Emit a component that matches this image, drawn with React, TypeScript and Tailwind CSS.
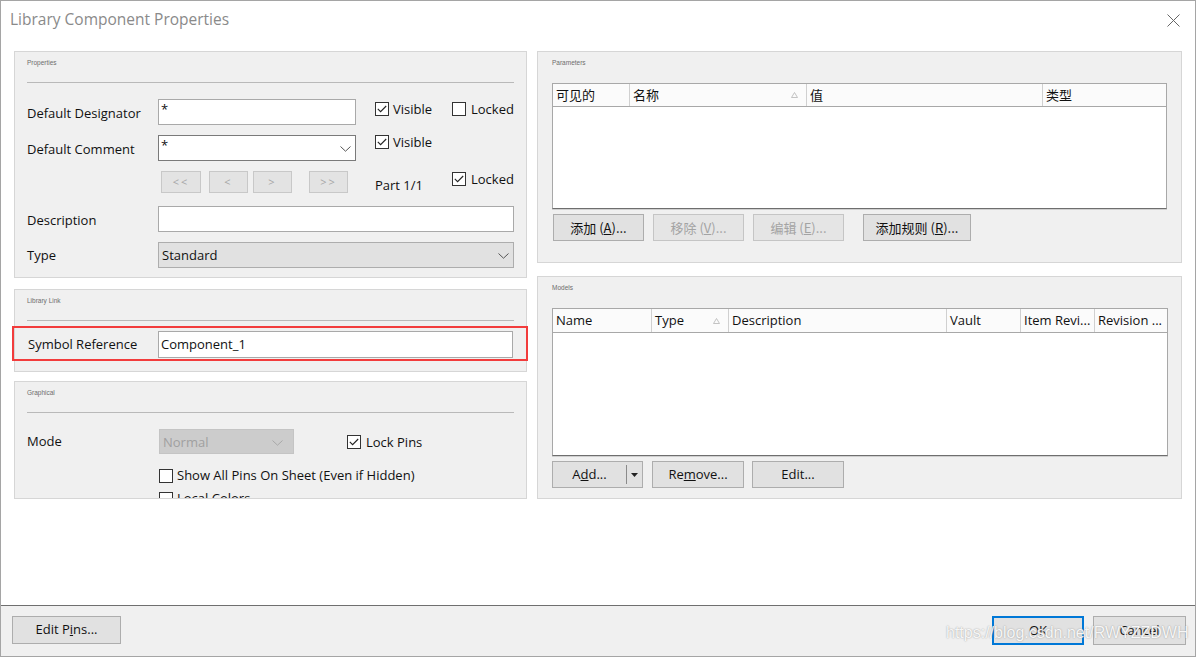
import React from "react";

const FONT = { fontFamily: '"Open Sans", "Noto Sans", "Noto Sans CJK SC", sans-serif' };

function Check({ checked }: { checked?: boolean }) {
  return (
    <span className="inline-flex w-[14px] h-[14px] border border-[#333333] bg-white items-center justify-center shrink-0">
      {checked && (
        <svg width="10" height="8" viewBox="0 0 10 8">
          <path d="M0.8 3.8 L3.6 6.6 L9.2 1" stroke="#222222" strokeWidth="1.1" fill="none" />
        </svg>
      )}
    </span>
  );
}

function Chevron({ color = "#555555" }: { color?: string }) {
  return (
    <svg width="11" height="6" viewBox="0 0 11 6">
      <path d="M0.5 0.5 L5.5 5.2 L10.5 0.5" stroke={color} strokeWidth="1" fill="none" />
    </svg>
  );
}

function SortArrow() {
  return (
    <svg width="7" height="6" viewBox="0 0 7 6">
      <path d="M3.5 0.5 L6.5 5.5 L0.5 5.5 Z" stroke="#b5b5b5" strokeWidth="0.8" fill="none" />
    </svg>
  );
}

function PanelTitle({ children, line }: { children: React.ReactNode; line?: boolean }) {
  return (
    <div className={line ? "h-[31px] border-b border-[#b9b9b9] pt-[6px]" : "h-[31px] pt-[6px]"}>
      <span className="block text-[6.5px] leading-[10px] text-[#6d6d6d]" style={{ fontFamily: '"Liberation Sans", sans-serif' }}>{children}</span>
    </div>
  );
}

function Btn({ children, w, disabled }: { children: React.ReactNode; w: string; disabled?: boolean }) {
  return (
    <div
      className={`${w} h-[27px] flex items-center justify-center border text-[13px] ${
        disabled ? "bg-[#e5e5e5] border-[#c5c5c5] text-[#a3a3a3]" : "bg-[#e1e1e1] border-[#adadad] text-[#111111]"
      }`}
    >
      {children}
    </div>
  );
}

function NavBtn({ children, w }: { children: React.ReactNode; w: string }) {
  return (
    <div className={`${w} h-[22px] flex items-center justify-center border border-[#c8c8c8] bg-[#e3e3e3] text-[11px] text-[#a6a6a6] tracking-[2px]`}>
      {children}
    </div>
  );
}

function HeaderCell({ children, w, arrow, last }: { children: React.ReactNode; w?: string; arrow?: boolean; last?: boolean }) {
  return (
    <div
      className={`${w ?? "flex-1"} h-full flex items-center pl-[3px] text-[13px] text-[#111111] shrink-0 ${
        arrow ? "pr-[8px]" : "pr-[2px]"
      } ${last ? "" : "border-r border-[#d0d0d0]"}`}
    >
      <span className="flex-1 whitespace-nowrap">{children}</span>
      {arrow && <SortArrow />}
    </div>
  );
}

export default function App() {
  return (
    <div
      className="relative w-[1196px] h-[657px] border border-[#a5a5a5] bg-white flex flex-col overflow-hidden text-[#111111]"
      style={FONT}
    >
      {/* Title bar */}
      <div className="h-[39px] shrink-0 flex items-center justify-between pl-[9px] pr-[15px]">
        <span className="text-[15.5px] text-[#8a8a8a] -mt-[1px]">Library Component Properties</span>
        <svg width="13" height="13" viewBox="0 0 13 13">
          <path d="M0.5 0.5 L12.5 12.5 M12.5 0.5 L0.5 12.5" stroke="#666666" strokeWidth="1" />
        </svg>
      </div>

      {/* Main */}
      <div className="flex-1 flex pl-[13px] gap-[10px]">
        {/* Left column */}
        <div className="w-[513px] pt-[11px] flex flex-col">
          {/* Properties */}
          <div className="h-[227px] border border-[#d6d6d6] bg-[#f0f0f0] px-[12px]">
            <PanelTitle line>Properties</PanelTitle>
            <div className="mt-[16px] h-[26px] flex items-start">
              <span className="w-[131px] h-[26px] pt-[4px] flex items-center text-[13px]">Default Designator</span>
              <div className="w-[198px] h-[26px] border border-[#a9a9a9] bg-white pl-[2px] text-[13px] leading-[18px]">*</div>
              <div className="ml-[19px] w-[77px] mt-[3px] flex items-center gap-[4px] text-[13px] leading-[14px]">
                <Check checked />
                <span>Visible</span>
              </div>
              <div className="mt-[3px] flex items-center gap-[5px] text-[13px] leading-[14px]">
                <Check />
                <span>Locked</span>
              </div>
            </div>
            <div className="mt-[10px] h-[26px] flex items-start">
              <span className="w-[131px] h-[26px] pt-[4px] flex items-center text-[13px]">Default Comment</span>
              <div className="w-[198px] h-[26px] border border-[#7a7a7a] bg-white pl-[2px] pr-[4px] flex justify-between text-[13px] leading-[18px]">
                <span>*</span>
                <span className="self-center mt-[2px]"><Chevron /></span>
              </div>
              <div className="ml-[19px] w-[77px] flex items-center gap-[4px] text-[13px] leading-[14px]">
                <Check checked />
                <span>Visible</span>
              </div>
            </div>
            <div className="mt-[10px] h-[22px] flex items-start">
              <div className="w-[131px]" />
              <div className="ml-[3px] flex">
                <NavBtn w="w-[40px]">&lt;&lt;</NavBtn>
                <div className="ml-[8px]"><NavBtn w="w-[39px]">&lt;</NavBtn></div>
                <div className="ml-[5px]"><NavBtn w="w-[39px]">&gt;</NavBtn></div>
                <div className="ml-[17px]"><NavBtn w="w-[39px]">&gt;&gt;</NavBtn></div>
              </div>
              <span className="ml-[27px] w-[77px] mt-[5px] text-[13px] leading-[18px]">Part 1/1</span>
              <div className="mt-[1px] flex items-center gap-[5px] text-[13px] leading-[14px]">
                <Check checked />
                <span>Locked</span>
              </div>
            </div>
            <div className="mt-[13px] h-[26px] flex items-center">
              <span className="w-[131px] pt-[4px] text-[13px]">Description</span>
              <div className="flex-1 h-[26px] border border-[#a9a9a9] bg-white" />
            </div>
            <div className="mt-[10px] h-[26px] flex items-center">
              <span className="w-[131px] pt-[2px] text-[13px]">Type</span>
              <div className="flex-1 h-[26px] border border-[#adadad] bg-[#e1e1e1] pl-[3px] pr-[4px] pt-[2px] flex items-center justify-between text-[13px]">
                <span>Standard</span>
                <Chevron />
              </div>
            </div>
          </div>

          {/* Library Link */}
          <div className="mt-[11px] h-[83px] border border-[#d6d6d6] bg-[#f0f0f0] px-[12px]">
            <PanelTitle line>Library Link</PanelTitle>
            <div className="mt-[5px] -ml-[15px] -mr-[14px] h-[35px] border-2 border-[#f23c3c] pl-[14px] pr-[13px] pt-[3px] flex items-start">
              <span className="w-[130px] h-[27px] flex items-center text-[13px]">Symbol Reference</span>
              <div className="flex-1 h-[27px] border border-[#a9a9a9] bg-white pl-[2px] pt-[1px] flex items-center text-[13px]">Component_1</div>
            </div>
          </div>

          {/* Graphical */}
          <div className="mt-[9px] h-[118px] border border-[#d6d6d6] bg-[#f0f0f0] px-[12px] overflow-hidden">
            <PanelTitle line>Graphical</PanelTitle>
            <div className="mt-[16px] h-[25px] flex items-center">
              <span className="w-[132px] text-[13px]">Mode</span>
              <div className="w-[135px] h-[25px] border border-[#c4c4c4] bg-[#cccccc] pl-[3px] pr-[10px] pt-[2px] flex items-center justify-between text-[13px] text-[#a0a0a0]">
                <span>Normal</span>
                <Chevron color="#a8a8a8" />
              </div>
              <div className="ml-[53px] flex items-center gap-[5px] text-[13px] leading-[14px]">
                <Check checked />
                <span>Lock Pins</span>
              </div>
            </div>
            <div className="mt-[12px] h-[20px] flex items-center pl-[132px] gap-[4px] text-[13px]">
              <Check />
              <span>Show All Pins On Sheet (Even if Hidden)</span>
            </div>
            <div className="mt-[3px] h-[20px] flex items-center pl-[132px] gap-[4px] text-[13px]">
              <Check />
              <span>Local Colors</span>
            </div>
          </div>
        </div>

        {/* Right column */}
        <div className="w-[645px] pt-[11px] flex flex-col">
          {/* Parameters */}
          <div className="h-[212px] border border-[#d6d6d6] bg-[#f0f0f0] pl-[14px] pr-[14px]">
            <PanelTitle>Parameters</PanelTitle>
            <div className="h-[126px] border border-[#a8a8a8] border-b-[#6e6e6e] bg-white shadow-[0_1px_0_#cfcfcf] flex flex-col">
              <div className="h-[23px] flex border-b border-[#a8a8a8] bg-[#fbfbfb]" style={{ fontFamily: '"Noto Sans CJK SC", sans-serif' }}>
                <HeaderCell w="w-[77px]">可见的</HeaderCell>
                <HeaderCell w="w-[177px]" arrow>名称</HeaderCell>
                <HeaderCell w="w-[236px]">值</HeaderCell>
                <HeaderCell last>类型</HeaderCell>
              </div>
            </div>
            <div className="mt-[5px] ml-[1px] flex" style={{ fontFamily: '"Noto Sans CJK SC", sans-serif' }}>
              <Btn w="w-[91px]">添加 (<span className="underline">A</span>)...</Btn>
              <div className="ml-[9px]"><Btn w="w-[91px]" disabled>移除 (<span className="underline">V</span>)...</Btn></div>
              <div className="ml-[9px]"><Btn w="w-[91px]" disabled>编辑 (<span className="underline">E</span>)...</Btn></div>
              <div className="ml-[19px]"><Btn w="w-[108px]">添加规则 (<span className="underline">R</span>)...</Btn></div>
            </div>
          </div>

          {/* Models */}
          <div className="mt-[13px] h-[223px] border border-[#d6d6d6] bg-[#f0f0f0] pl-[14px] pr-[13px]">
            <PanelTitle>Models</PanelTitle>
            <div className="h-[148px] border border-[#a8a8a8] border-b-[#6e6e6e] bg-white shadow-[0_1px_0_#cfcfcf] flex flex-col">
              <div className="h-[24px] flex border-b border-[#a8a8a8] bg-[#fbfbfb]">
                <HeaderCell w="w-[99px]">Name</HeaderCell>
                <HeaderCell w="w-[77px]" arrow>Type</HeaderCell>
                <HeaderCell w="w-[218px]">Description</HeaderCell>
                <HeaderCell w="w-[74px]">Vault</HeaderCell>
                <HeaderCell w="w-[74px]">Item Revi...</HeaderCell>
                <HeaderCell last>Revision ...</HeaderCell>
              </div>
            </div>
            <div className="mt-[5px] flex">
              <div className="w-[91px] h-[27px] flex border border-[#adadad] bg-[#e1e1e1] text-[13px]">
                <div className="flex-1 flex items-center justify-center">A<span className="underline">d</span>d...</div>
                <div className="w-[16px] my-[3px] border-l border-[#8a8a8a] flex items-center justify-center">
                  <svg width="7" height="4" viewBox="0 0 7 4"><path d="M0 0 L7 0 L3.5 4 Z" fill="#222222" /></svg>
                </div>
              </div>
              <div className="ml-[9px]"><Btn w="w-[92px]">Re<span className="underline">m</span>ove...</Btn></div>
              <div className="ml-[8px]"><Btn w="w-[92px]">Edit...</Btn></div>
            </div>
          </div>
        </div>
      </div>

      {/* Footer */}
      <div className="h-[51px] shrink-0 border-t border-[#6f6f6f] bg-[#f0f0f0] pt-[10px] pl-[11px] pr-[9px] flex items-start justify-between">
        <div className="w-[109px] h-[28px] border border-[#adadad] bg-[#e1e1e1] flex items-center justify-center text-[13px]">
          Edit P<span className="underline">i</span>ns...
        </div>
        <div className="flex gap-[9px]">
          <div className="w-[92px] h-[29px] border-2 border-[#0078d7] bg-[#e1e1e1] flex items-center justify-center text-[13px]">OK</div>
          <div className="w-[93px] h-[29px] border border-[#adadad] bg-[#e1e1e1] flex items-center justify-center text-[13px]">Cancel</div>
        </div>
      </div>

      {/* Watermark */}
      <div
        className="absolute left-[945px] top-[620px] text-[16px] text-white/90 [text-shadow:0_0_1.5px_#8a8a8a]"
        style={{ fontFamily: '"Liberation Sans", sans-serif' }}
      >
        https://blog.csdn.net/RWYZZDWH
      </div>
    </div>
  );
}
